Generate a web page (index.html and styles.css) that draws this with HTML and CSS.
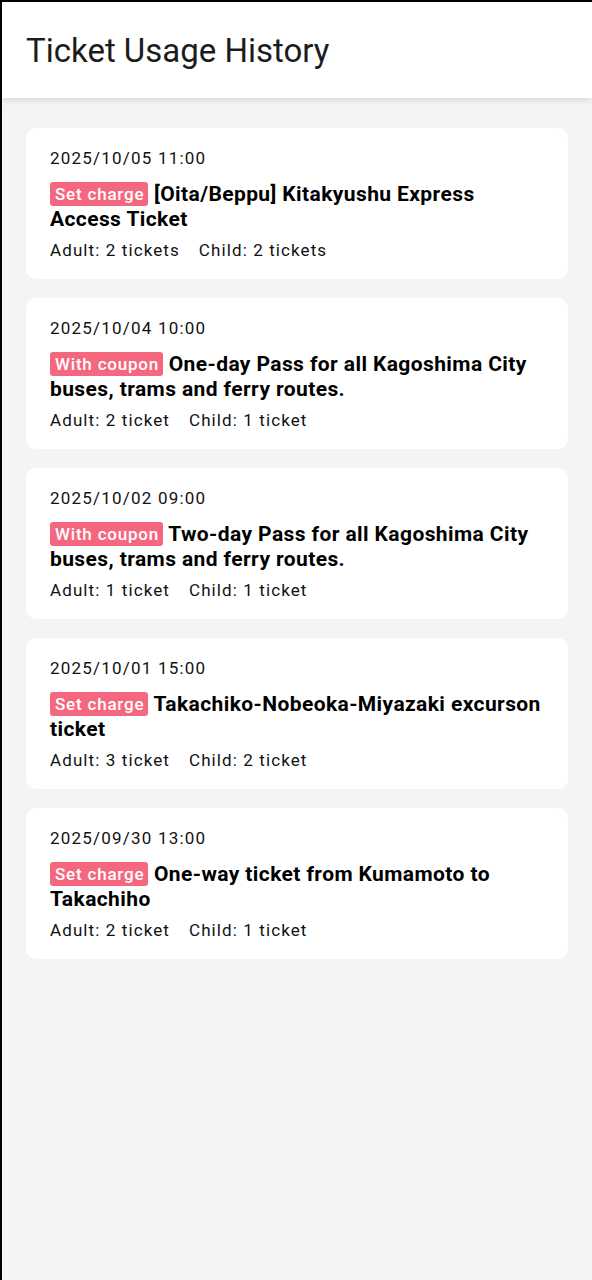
FILE: index.html
```html
<!DOCTYPE html>
<html lang="en">

<head>
    <meta charset="UTF-8">
    <meta name="viewport" content="width=device-width, initial-scale=1.0">
    <title>Ticket Usage History</title>
    <link rel="stylesheet" href="styles.css">
</head>

<body>
    <div class="screen">
        <header class="appBar">
            <h1>Ticket Usage History</h1>
        </header>

        <main class="historyList">
            <div class="card">
                <div class="date">2025/10/05 11:00</div>
                <div class="title"><span class="badge">Set charge</span> [Oita/Beppu] Kitakyushu Express Access Ticket</div>
                <div class="counts"><span>Adult: 2 tickets</span><span>Child: 2 tickets</span></div>
            </div>
            <div class="card">
                <div class="date">2025/10/04 10:00</div>
                <div class="title"><span class="badge">With coupon</span> One-day Pass for all Kagoshima City buses, trams and ferry routes.</div>
                <div class="counts"><span>Adult: 2 ticket</span><span>Child: 1 ticket</span></div>
            </div>
            <div class="card">
                <div class="date">2025/10/02 09:00</div>
                <div class="title"><span class="badge">With coupon</span> Two-day Pass for all Kagoshima City buses, trams and ferry routes.</div>
                <div class="counts"><span>Adult: 1 ticket</span><span>Child: 1 ticket</span></div>
            </div>
            <div class="card">
                <div class="date">2025/10/01 15:00</div>
                <div class="title"><span class="badge">Set charge</span> Takachiko-Nobeoka-Miyazaki excurson ticket</div>
                <div class="counts"><span>Adult: 3 ticket</span><span>Child: 2 ticket</span></div>
            </div>
            <div class="card">
                <div class="date">2025/09/30 13:00</div>
                <div class="title"><span class="badge">Set charge</span> One-way ticket from Kumamoto to Takachiho</div>
                <div class="counts"><span>Adult: 2 ticket</span><span>Child: 1 ticket</span></div>
            </div>
        </main>
    </div>
</body>

</html>
```

FILE: styles.css
```css
* {
    box-sizing: border-box;
}

body {
    margin: 0;
    font-family: Roboto, "Noto Sans", sans-serif;
    background-color: #f4f4f4;
}

.screen {
    min-height: 1280px;
    border-left: 2px solid #000;
    border-top: 2px solid #000;
    background-color: #f4f4f4;
}

.appBar {
    height: 96px;
    background-color: #fff;
    display: flex;
    align-items: center;
    padding-left: 24px;
    box-shadow: 0 2px 6px rgba(0, 0, 0, 0.12);
    position: relative;
}

.appBar h1 {
    margin: 0;
    font-size: 33px;
    font-weight: 400;
    color: #1c1c1c;
}

.historyList {
    padding: 30px 24px 20px 24px;
    display: flex;
    flex-direction: column;
    gap: 19px;
}

.card {
    background-color: #fff;
    border-radius: 10px;
    padding: 19px 20px 18px 24px;
    height: 151px;
}

.date {
    font-size: 17px;
    letter-spacing: 1.2px;
    color: #111;
    line-height: 22px;
}

.title {
    margin-top: 13px;
    font-size: 21px;
    font-weight: 700;
    letter-spacing: 0.4px;
    line-height: 25px;
    color: #000;
}

.badge {
    display: inline-block;
    background-color: #f5677f;
    color: #fff;
    font-size: 17px;
    font-weight: 500;
    letter-spacing: 0.8px;
    line-height: 24px;
    padding: 0 4px 0 5px;
    border-radius: 3px;
    vertical-align: 1px;
}

.counts {
    margin-top: 7px;
    font-size: 17px;
    letter-spacing: 1.1px;
    line-height: 22px;
    color: #111;
    display: flex;
    gap: 19px;
}
```
